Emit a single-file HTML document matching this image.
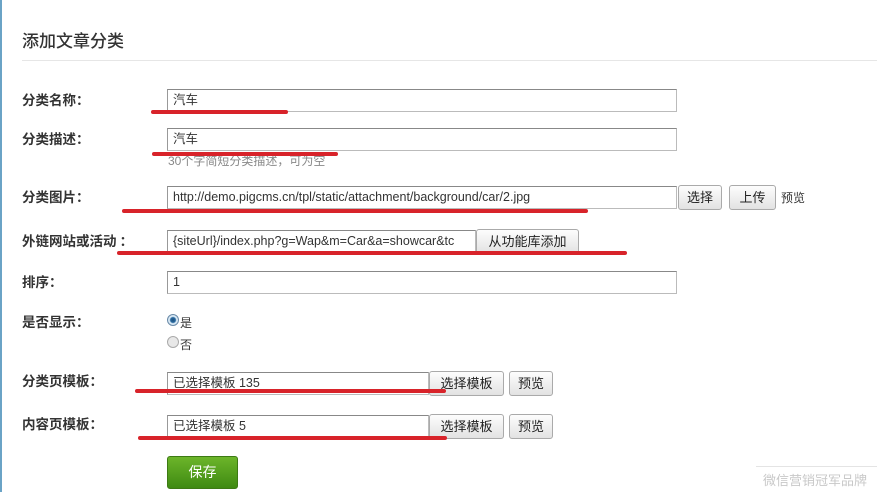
<!DOCTYPE html>
<html><head><meta charset="utf-8"><style>
*{margin:0;padding:0;box-sizing:border-box}
body{width:877px;height:492px;background:#fff;position:relative;overflow:hidden;font-family:"Liberation Sans","Noto Sans CJK SC",sans-serif;color:#333}
.a{position:absolute}
.lbl{position:absolute;left:22px;font-size:13.5px;font-weight:bold;color:#333;line-height:16px;font-family:"Noto Sans CJK SC",sans-serif}
.inp{position:absolute;height:23px;border:1px solid #bbb;border-top-color:#888;border-left-color:#999;background:#fff;font-size:12.5px;line-height:21px;padding-left:5px;color:#333;white-space:nowrap;overflow:hidden}
.btn{position:absolute;height:25px;border:1px solid #aaa;border-radius:3px;background:linear-gradient(#fdfdfd,#e2e2e2);font-size:13px;line-height:23px;text-align:center;color:#222}
.red{position:absolute;height:4px;background:#d8232a;border-radius:2px}
</style></head><body>
<div class="a" style="left:0;top:0;width:2px;height:492px;background:#6aa3c6"></div>
<div class="a" style="left:22px;top:30px;font-size:17px;color:#333;line-height:20px;font-family:'Noto Sans CJK SC',sans-serif;font-weight:500">添加文章分类</div>
<div class="a" style="left:22px;top:60px;width:855px;height:1px;background:#e6e6e6"></div>

<div class="lbl" style="top:91px">分类名称：</div>
<div class="lbl" style="top:130px">分类描述：</div>
<div class="lbl" style="top:188px">分类图片：</div>
<div class="lbl" style="top:232px">外链网站或活动 ：</div>
<div class="lbl" style="top:273px">排序：</div>
<div class="lbl" style="top:313px">是否显示：</div>
<div class="lbl" style="top:372px">分类页模板：</div>
<div class="lbl" style="top:415px">内容页模板：</div>

<div class="inp" style="left:167px;top:89px;width:510px">汽车</div>
<div class="inp" style="left:167px;top:128px;width:510px">汽车</div>
<div class="a" style="left:168px;top:152px;font-size:12px;color:#888">30个字简短分类描述，可为空</div>
<div class="inp" style="left:167px;top:186px;width:510px">http://demo.pigcms.cn/tpl/static/attachment/background/car/2.jpg</div>
<div class="btn" style="left:678px;top:185px;width:44px">选择</div>
<div class="btn" style="left:729px;top:185px;width:47px">上传</div>
<div class="a" style="left:781px;top:189px;font-size:12px;color:#333">预览</div>
<div class="inp" style="left:167px;top:230px;width:309px">{siteUrl}/index.php?g=Wap&amp;m=Car&amp;a=showcar&amp;tc</div>
<div class="btn" style="left:476px;top:229px;width:103px">从功能库添加</div>
<div class="inp" style="left:167px;top:271px;width:510px">1</div>

<div class="a" style="left:167px;top:314px;width:12px;height:12px;border-radius:50%;border:1px solid #6a8aa8;background:radial-gradient(circle,#1c4f7c 0,#2a6aa0 2.5px,#d8e8f4 3.5px)"></div>
<div class="a" style="left:180px;top:314px;font-size:12px">是</div>
<div class="a" style="left:167px;top:336px;width:12px;height:12px;border-radius:50%;border:1px solid #aaa;background:#e8e8e8"></div>
<div class="a" style="left:180px;top:336px;font-size:12px">否</div>

<div class="inp" style="left:167px;top:372px;width:262px">已选择模板 135</div>
<div class="btn" style="left:429px;top:371px;width:75px">选择模板</div>
<div class="btn" style="left:509px;top:371px;width:44px">预览</div>
<div class="inp" style="left:167px;top:415px;width:262px">已选择模板 5</div>
<div class="btn" style="left:429px;top:414px;width:75px">选择模板</div>
<div class="btn" style="left:509px;top:414px;width:44px">预览</div>

<div class="a" style="left:167px;top:456px;width:71px;height:33px;border-radius:3px;background:linear-gradient(#6cb52a,#3f8a12);border:1px solid #3d7a14;color:#fff;font-size:14px;text-align:center;line-height:31px">保存</div>

<div class="a" style="left:756px;top:466px;width:121px;height:1px;background:#e4e4e4"></div>
<div class="a" style="left:763px;top:470px;font-size:13px;color:#c8c8c8">微信营销冠军品牌</div>

<div class="red" style="left:151px;top:110px;width:137px"></div>
<div class="red" style="left:152px;top:152px;width:186px"></div>
<div class="red" style="left:122px;top:209px;width:466px"></div>
<div class="red" style="left:117px;top:251px;width:510px"></div>
<div class="red" style="left:135px;top:389px;width:311px"></div>
<div class="red" style="left:138px;top:436px;width:309px"></div>
</body></html>
